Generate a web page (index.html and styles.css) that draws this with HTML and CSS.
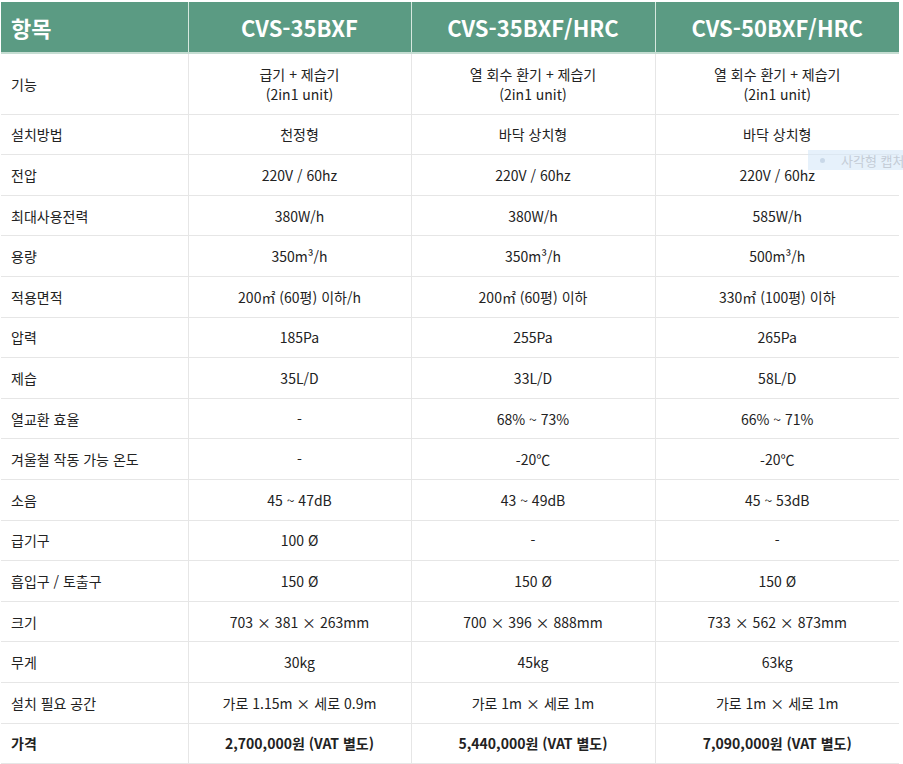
FILE: index.html
```html
<!DOCTYPE html>
<html lang="ko">
<head>
<meta charset="utf-8">
<link rel="stylesheet" href="styles.css">
</head>
<body>
<div class="wrap">
<table class="spec">
  <colgroup>
    <col class="c1"><col class="c2"><col class="c3"><col class="c4">
  </colgroup>
  <thead>
    <tr>
      <th class="lab">항목</th>
      <th>CVS-35BXF</th>
      <th>CVS-35BXF/HRC</th>
      <th>CVS-50BXF/HRC</th>
    </tr>
  </thead>
  <tbody>
    <tr><td class="lab">기능</td><td>급기 + 제습기<br>(2in1 unit)</td><td>열 회수 환기 + 제습기<br>(2in1 unit)</td><td>열 회수 환기 + 제습기<br>(2in1 unit)</td></tr>
    <tr><td class="lab">설치방법</td><td>천정형</td><td>바닥 상치형</td><td>바닥 상치형</td></tr>
    <tr><td class="lab">전압</td><td>220V / 60hz</td><td>220V / 60hz</td><td>220V / 60hz</td></tr>
    <tr><td class="lab">최대사용전력</td><td>380W/h</td><td>380W/h</td><td>585W/h</td></tr>
    <tr><td class="lab">용량</td><td>350m³/h</td><td>350m³/h</td><td>500m³/h</td></tr>
    <tr><td class="lab">적용면적</td><td>200㎡ (60평) 이하/h</td><td>200㎡ (60평) 이하</td><td>330㎡ (100평) 이하</td></tr>
    <tr><td class="lab">압력</td><td>185Pa</td><td>255Pa</td><td>265Pa</td></tr>
    <tr><td class="lab">제습</td><td>35L/D</td><td>33L/D</td><td>58L/D</td></tr>
    <tr><td class="lab">열교환 효율</td><td>-</td><td>68% ~ 73%</td><td>66% ~ 71%</td></tr>
    <tr><td class="lab">겨울철 작동 가능 온도</td><td>-</td><td>-20℃</td><td>-20℃</td></tr>
    <tr><td class="lab">소음</td><td>45 ~ 47dB</td><td>43 ~ 49dB</td><td>45 ~ 53dB</td></tr>
    <tr><td class="lab">급기구</td><td>100 Ø</td><td>-</td><td>-</td></tr>
    <tr><td class="lab">흡입구 / 토출구</td><td>150 Ø</td><td>150 Ø</td><td>150 Ø</td></tr>
    <tr><td class="lab">크기</td><td>703 × 381 × 263mm</td><td>700 × 396 × 888mm</td><td>733 × 562 × 873mm</td></tr>
    <tr><td class="lab">무게</td><td>30kg</td><td>45kg</td><td>63kg</td></tr>
    <tr><td class="lab">설치 필요 공간</td><td>가로 1.15m × 세로 0.9m</td><td>가로 1m × 세로 1m</td><td>가로 1m × 세로 1m</td></tr>
    <tr class="price"><td class="lab">가격</td><td>2,700,000원 (VAT 별도)</td><td>5,440,000원 (VAT 별도)</td><td>7,090,000원 (VAT 별도)</td></tr>
  </tbody>
</table>
<div class="capture"><span class="dot"></span><span class="cap-text">사각형 캡처</span></div>
</div>
</body>
</html>
```

FILE: styles.css
```css
html, body {
  margin: 0;
  padding: 0;
  background: #ffffff;
}
body {
  font-family: "Noto Sans CJK KR", "Noto Sans", sans-serif;
  color: #222222;
}
.wrap {
  position: relative;
  padding: 2px 0 0 1px;
  width: 898px;
}
.spec {
  width: 898px;
  border-collapse: collapse;
  table-layout: fixed;
  font-size: 14px;
}
.c1 { width: 187px; }
.c2 { width: 223px; }
.c3 { width: 244px; }
.c4 { width: 244px; }

.spec thead th {
  background: #5b9b83;
  color: #ffffff;
  font-size: 22px;
  font-weight: 700;
  line-height: 30px;
  padding: 10px 8px;
  text-align: center;
  border-left: 1px solid #d6e8df;
  border-bottom: 2px solid #c5ddd2;
}
.spec thead th:first-child {
  border-left: none;
}
.spec thead th.lab {
  text-align: left;
  padding-left: 10px;
}
.spec td {
  text-align: center;
  line-height: 20px;
  padding: 9.8px 8px;
  border-bottom: 1px solid #e6e6e6;
  border-left: 1px solid #e6e6e6;
  vertical-align: middle;
}
.spec td.lab {
  text-align: left;
  padding-left: 10px;
  border-left: none;
}
.spec tr.price td {
  font-weight: 700;
}

.capture {
  position: absolute;
  left: 808px;
  top: 150px;
  width: 95px;
  height: 20px;
  background: rgba(214, 231, 248, 0.6);
  display: flex;
  align-items: center;
  overflow: hidden;
  white-space: nowrap;
}
.capture .dot {
  width: 5px;
  height: 5px;
  border-radius: 50%;
  background: #c9d8e8;
  margin-left: 12px;
  margin-right: 16px;
  flex: none;
}
.capture .cap-text {
  font-size: 13px;
  color: #c4ccd6;
}
```
